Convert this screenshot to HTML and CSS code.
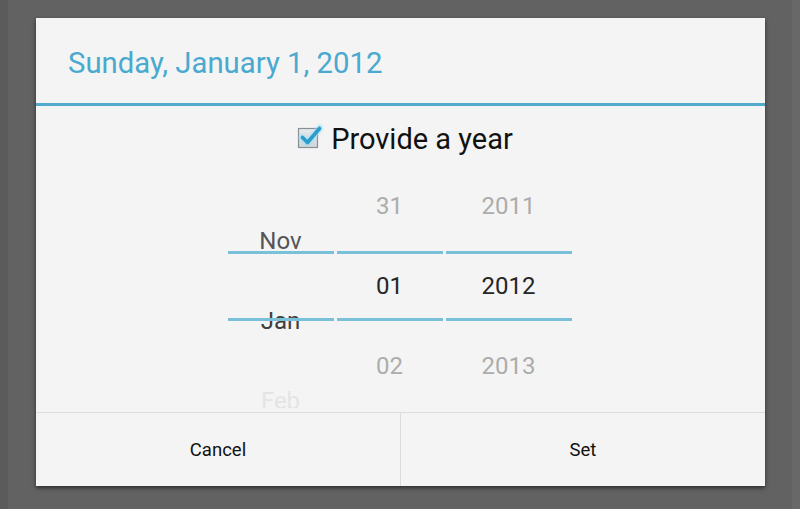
FILE: index.html
```html
<!DOCTYPE html>
<html>
<head>
<meta charset="utf-8">
<link rel="stylesheet" href="styles.css">
</head>
<body>
<div class="screen">
  <div class="dialog">
    <div class="title">Sunday, January 1, 2012</div>
    <div class="content">
      <div class="yearrow">
        <svg class="cb" width="28" height="28" viewBox="0 0 28 28">
          <defs>
            <linearGradient id="bx" x1="0" y1="0" x2="0" y2="1">
              <stop offset="0" stop-color="#e4eaee"/>
              <stop offset="1" stop-color="#cfd6da"/>
            </linearGradient>
            <filter id="gl" x="-30%" y="-30%" width="160%" height="160%">
              <feGaussianBlur stdDeviation="1.2"/>
            </filter>
          </defs>
          <rect x="3.5" y="6.5" width="19" height="19" fill="url(#bx)" stroke="#8a8f92" stroke-width="1.2"/>
          <path d="M7 15.5 L12.5 21 L25 6" fill="none" stroke="#9fdcf5" stroke-width="6" stroke-linecap="round" stroke-linejoin="round" filter="url(#gl)" opacity="0.8"/>
          <path d="M7.5 15.5 L12.5 20.5 L24.5 6.5" fill="none" stroke="#2a9ccd" stroke-width="3.6" stroke-linecap="round" stroke-linejoin="round"/>
        </svg>
        <span class="label">Provide a year</span>
      </div>
      <div class="pickers">
        <div class="col col-month">
          <div class="items shifted">
            <div class="item mid">Nov</div>
            <div class="item dark">Jan</div>
            <div class="item faint">Feb</div>
          </div>
          <div class="sel"></div>
        </div>
        <div class="col col-day">
          <div class="items">
            <div class="item dim">31</div>
            <div class="item cur">01</div>
            <div class="item dim">02</div>
          </div>
          <div class="sel"></div>
        </div>
        <div class="col col-year">
          <div class="items">
            <div class="item dim">2011</div>
            <div class="item cur">2012</div>
            <div class="item dim">2013</div>
          </div>
          <div class="sel"></div>
        </div>
      </div>
    </div>
    <div class="buttons">
      <div class="btn">Cancel</div>
      <div class="btn">Set</div>
    </div>
  </div>
</div>
</body>
</html>
```
FILE: styles.css
```css
html, body {
  margin: 0;
  padding: 0;
}
body {
  width: 800px;
  height: 509px;
  overflow: hidden;
  background: linear-gradient(to right, #5b5b5b 0, #5b5b5b 8px, #626262 8px, #626262 792px, #686868 792px);
  font-family: Roboto, "Noto Sans", sans-serif;
}
.screen {
  padding: 18px 0 0 36px;
}
.dialog {
  width: 729px;
  height: 468px;
  background: #f4f4f4;
  display: flex;
  flex-direction: column;
  box-shadow: 0 2px 4px rgba(0, 0, 0, 0.55);
}
.title {
  box-sizing: border-box;
  border-bottom: 3px solid #52abcb;
  height: 88px;
  padding-left: 32px;
  padding-top: 4px;
  display: flex;
  align-items: center;
  color: #49a9cf;
  font-size: 29.3px;
}
.content {
  flex: 1;
  display: flex;
  flex-direction: column;
  align-items: center;
  overflow: hidden;
}
.yearrow {
  height: 61px;
  display: flex;
  align-items: center;
  gap: 8px;
  padding-top: 5px;
  box-sizing: border-box;
  margin-left: 7px;
}
.cb {
  margin-top: -6px;
}
.label {
  font-size: 29px;
  color: #111;
}
.pickers {
  display: flex;
  gap: 3px;
  height: 246px;
  margin-left: -2px;
}
.col {
  position: relative;
  height: 246px;
  overflow: hidden;
  font-size: 24px;
}
.col-month { width: 106px; height: 242px; }
.col-day { width: 106px; }
.col-year { width: 126px; }
.items {
  display: flex;
  flex-direction: column;
}
.items.shifted {
  margin-top: 35px;
}
.item {
  height: 80px;
  display: flex;
  align-items: center;
  justify-content: center;
}
.dim { color: #acacac; }
.cur { color: #262626; }
.mid { color: #555; }
.dark { color: #3e3e3e; }
.faint { color: #e4e4e4; }
.sel {
  position: absolute;
  left: 0;
  right: 0;
  top: 85px;
  height: 64px;
  border-top: 3px solid #79c0d9;
  border-bottom: 3px solid #79c0d9;
}
.buttons {
  height: 73px;
  border-top: 1px solid #dcdcdc;
  display: flex;
}
.btn {
  flex: 1;
  display: flex;
  align-items: center;
  justify-content: center;
  font-size: 18.5px;
  color: #111;
  padding-top: 1px;
}
.btn + .btn {
  border-left: 1px solid #dcdcdc;
}
```
